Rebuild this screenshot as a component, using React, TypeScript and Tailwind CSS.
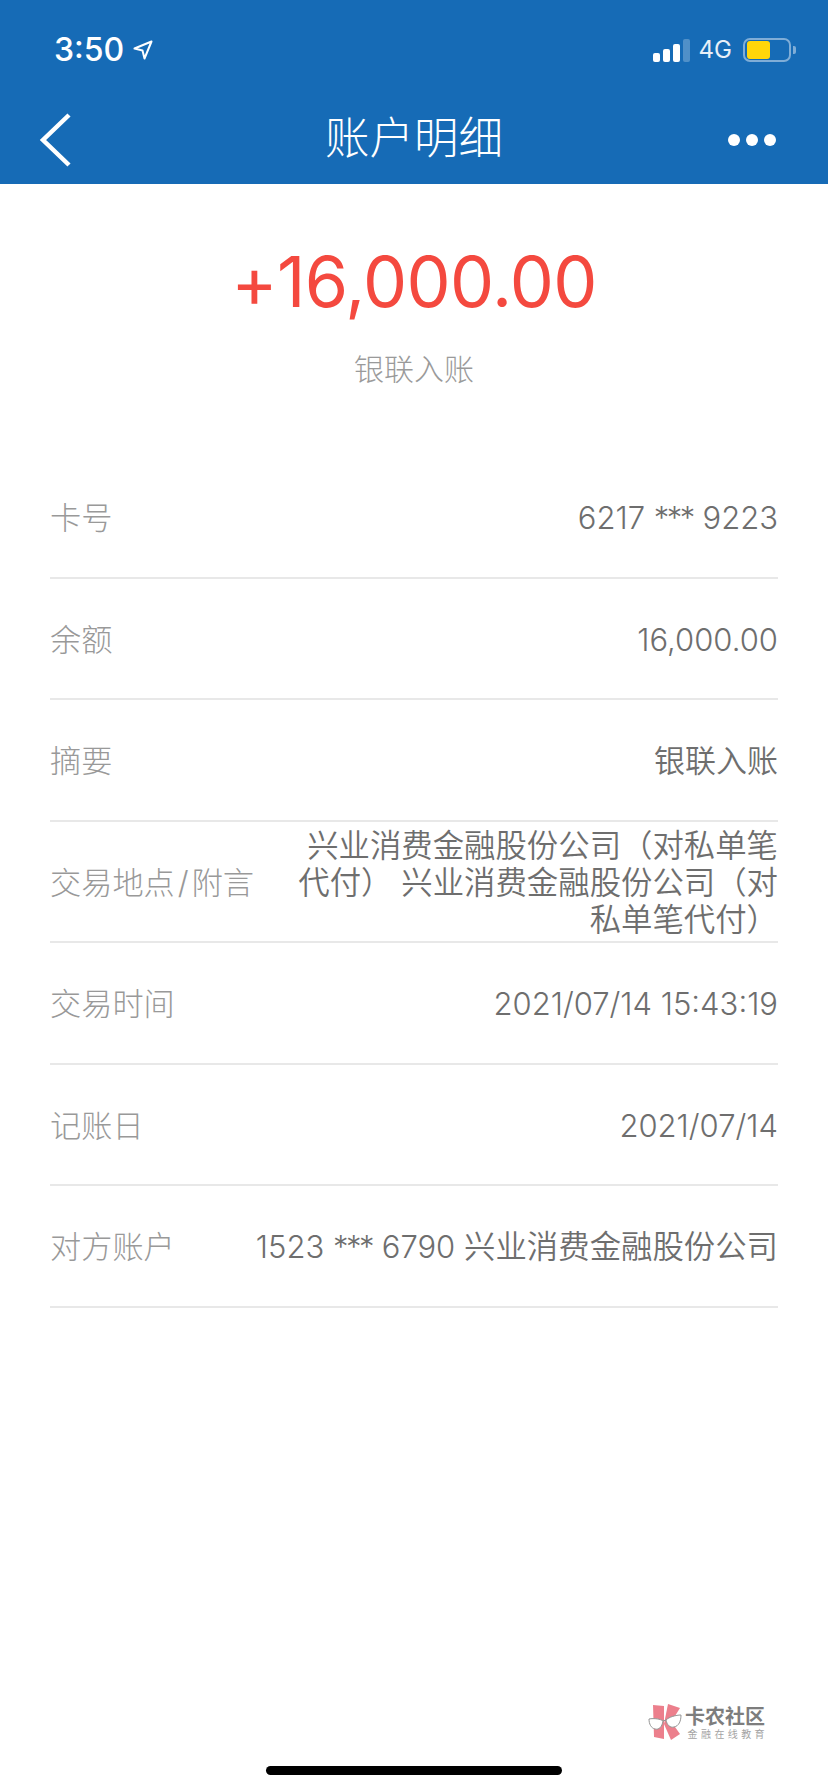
import type { ReactNode } from "react";

const stars = <span className="mr-[1px] tracking-[-2.5px]">***</span>;

const rows: { label: ReactNode; value: ReactNode; size: string; key: string }[] = [
  { key: "card", label: "卡号", value: <>6217 {stars} 9223</>, size: "text-[31px] whitespace-nowrap" },
  { key: "balance", label: "余额", value: "16,000.00", size: "text-[31px] whitespace-nowrap" },
  { key: "memo", label: "摘要", value: "银联入账", size: "text-[31px] whitespace-nowrap" },
  {
    key: "place",
    label: (
      <>
        交易地点<span className="mx-[3px]">/</span>附言
      </>
    ),
    value: "兴业消费金融股份公司（对私单笔代付） 兴业消费金融股份公司（对私单笔代付）",
    size: "text-[31.4px] max-w-[490px]",
  },
  { key: "time", label: "交易时间", value: "2021/07/14 15:43:19", size: "text-[31px] whitespace-nowrap" },
  { key: "date", label: "记账日", value: "2021/07/14", size: "text-[31px] whitespace-nowrap" },
  {
    key: "other",
    label: "对方账户",
    value: (
      <>
        <span className="text-[31px]">1523 {stars} 6790</span> 兴业消费金融股份公司
      </>
    ),
    size: "text-[31.4px] whitespace-nowrap",
  },
];

const font = "font-['Inter','Noto_Sans_CJK_SC',sans-serif]";

function StatusBar() {
  return (
    <div className="flex h-[88px] items-end justify-between pb-[20px] pl-[54px] pr-[32px]">
      <div className="flex h-[36px] items-center gap-[9px]">
        <span className="text-[32px] leading-[36px] font-medium text-white">3:50</span>
        <svg width="20" height="20" viewBox="0 0 20 20" fill="none" stroke="#fff" strokeWidth="2" strokeLinejoin="round">
          <path d="M18.5 1.5 1.5 8.5 9.5 10.5 11.5 18.5Z" />
        </svg>
      </div>
      <div className="flex h-[36px] items-center">
        <div className="flex items-end gap-[3px]">
          <div className="h-[9px] w-[7px] rounded-[2px] bg-white" />
          <div className="h-[13px] w-[7px] rounded-[2px] bg-white" />
          <div className="h-[18px] w-[7px] rounded-[2px] bg-white" />
          <div className="h-[23px] w-[7px] rounded-[2px] bg-white/25" />
        </div>
        <span className="ml-[9px] text-[24px] leading-[30px] text-white/90">4G</span>
        <div className="ml-[11px] flex h-[24px] w-[48px] items-center rounded-[7px] border-2 border-white/45 px-[2px] py-[1px]">
          <div className="h-[18px] w-[23px] rounded-[3px] bg-[#ffd60a]" />
        </div>
        <div className="ml-[2px] h-[8px] w-[3px] rounded-r-[2px] bg-white/45" />
      </div>
    </div>
  );
}

function NavBar() {
  return (
    <div className="grid h-[96px] grid-cols-[1fr_auto_1fr] items-center px-[52px] pt-[8px]">
      <svg className="ml-[-13px]" width="32" height="54" viewBox="0 0 32 54" fill="none" stroke="#fff" strokeWidth="4.5">
        <path d="M30 2 4 27 30 52" />
      </svg>
      <span className="mb-[4px] text-[44.5px] leading-[60px] font-light text-white">账户明细</span>
      <div className="flex gap-[6px] justify-self-end">
        <div className="size-[12px] rounded-full bg-white" />
        <div className="size-[12px] rounded-full bg-white" />
        <div className="size-[12px] rounded-full bg-white" />
      </div>
    </div>
  );
}

function Logo() {
  return (
    <div className="absolute bottom-[52px] left-[648px] flex items-end opacity-90">
      <svg width="34" height="36" viewBox="0 0 34 36">
        <path d="M5 1 16 2V35L6 33Z" fill="#ea7280" />
        <path d="M20 0 32 4 22 20H16Z" fill="#ea7280" />
        <path d="M16 20 22 16 32 30 23 36Z" fill="#ea7280" />
        <path d="M1 15C6 14 13 15 15 17 14 23 11 26 7 25 3 24 1 20 1 15Z" fill="#fff" stroke="#8a8a8a" />
        <path d="M33 11C28 11 21 13 18 16 19 21 22 24 26 23 31 22 33 17 33 11Z" fill="#fff" stroke="#8a8a8a" />
        <path d="M15 17 18 16" stroke="#8a8a8a" />
      </svg>
      <div className="ml-[3px] flex flex-col items-end">
        <span className="text-[20px] leading-[22px] font-bold text-[#707070]">卡农社区</span>
        <span className="mr-[-3px] text-[10px] leading-[12px] tracking-[3.4px] text-[#9a9a9a]">金融在线教育</span>
      </div>
    </div>
  );
}

export default function App() {
  return (
    <div className={`relative h-[1792px] w-[828px] overflow-hidden bg-white ${font}`}>
      <header className="h-[184px] bg-[#166bb6]">
        <StatusBar />
        <NavBar />
      </header>
      <div className="flex h-[273px] flex-col items-center pt-[58px]">
        <div className="text-[70px] leading-[80px] font-[380] tracking-[-0.6px] text-[#f4493f]">+16,000.00</div>
        <div className="mt-[25px] text-[30px] leading-[44px] font-light text-[#9a9a9a]">银联入账</div>
      </div>
      <div className="mx-[50px]">
        {rows.map((r) => (
          <div key={r.key} className="flex h-[121.5px] items-center justify-between border-b-2 border-[#e8e8e8] pt-[4px]">
            <span className="shrink-0 text-[31.2px] font-light text-[#999999]">{r.label}</span>
            <span className={`text-right leading-[36.6px] font-[350] text-[#6e6e6e] ${r.size}`}>{r.value}</span>
          </div>
        ))}
      </div>
      <Logo />
      <div className="absolute bottom-[17px] left-[266px] h-[9px] w-[296px] rounded-full bg-black" />
    </div>
  );
}
